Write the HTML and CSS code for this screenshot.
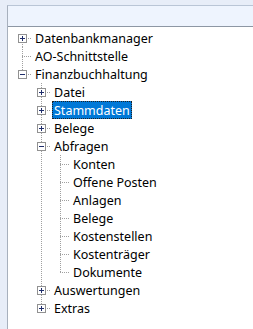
FILE: index.html
```html
<!DOCTYPE html>
<html lang="de">
  <head>
    <meta charset="UTF-8" />
    <meta name="viewport" content="width=device-width, initial-scale=1.0" />
    <title>Navigation</title>
    <link rel="stylesheet" href="styles.css">
  </head>
  <body>
    <div class="frame">
      <div class="header"></div>

      <!-- Tree with dotted connector lines -->
      <div class="panel">
        <ul class="tree">
          <li>
            <div class="row">
              <svg class="tgl" width="9" height="9"><rect x="0.5" y="0.5" width="8" height="8" fill="#fff" stroke="#919191"/><path d="M2 4.5h5M4.5 2v5" stroke="#1f2d6b"/></svg>
              <span class="label">Datenbankmanager</span>
            </div>
          </li>
          <li>
            <div class="row"><span class="slot"></span><span class="label">AO-Schnittstelle</span></div>
          </li>
          <li>
            <div class="row">
              <svg class="tgl" width="9" height="9"><rect x="0.5" y="0.5" width="8" height="8" fill="#fff" stroke="#919191"/><path d="M2 4.5h5" stroke="#1f2d6b"/></svg>
              <span class="label">Finanzbuchhaltung</span>
            </div>
            <ul>
              <li>
                <div class="row">
                  <svg class="tgl" width="9" height="9"><rect x="0.5" y="0.5" width="8" height="8" fill="#fff" stroke="#919191"/><path d="M2 4.5h5M4.5 2v5" stroke="#1f2d6b"/></svg>
                  <span class="label">Datei</span>
                </div>
              </li>
              <li>
                <div class="row">
                  <svg class="tgl" width="9" height="9"><rect x="0.5" y="0.5" width="8" height="8" fill="#fff" stroke="#919191"/><path d="M2 4.5h5M4.5 2v5" stroke="#1f2d6b"/></svg>
                  <span class="label selected">Stammdaten</span>
                </div>
              </li>
              <li>
                <div class="row">
                  <svg class="tgl" width="9" height="9"><rect x="0.5" y="0.5" width="8" height="8" fill="#fff" stroke="#919191"/><path d="M2 4.5h5M4.5 2v5" stroke="#1f2d6b"/></svg>
                  <span class="label">Belege</span>
                </div>
              </li>
              <li>
                <div class="row">
                  <svg class="tgl" width="9" height="9"><rect x="0.5" y="0.5" width="8" height="8" fill="#fff" stroke="#919191"/><path d="M2 4.5h5" stroke="#1f2d6b"/></svg>
                  <span class="label">Abfragen</span>
                </div>
                <ul>
                  <li><div class="row"><span class="slot"></span><span class="label">Konten</span></div></li>
                  <li><div class="row"><span class="slot"></span><span class="label">Offene Posten</span></div></li>
                  <li><div class="row"><span class="slot"></span><span class="label">Anlagen</span></div></li>
                  <li><div class="row"><span class="slot"></span><span class="label">Belege</span></div></li>
                  <li><div class="row"><span class="slot"></span><span class="label">Kostenstellen</span></div></li>
                  <li><div class="row"><span class="slot"></span><span class="label">Kostenträger</span></div></li>
                  <li><div class="row"><span class="slot"></span><span class="label">Dokumente</span></div></li>
                </ul>
              </li>
              <li>
                <div class="row">
                  <svg class="tgl" width="9" height="9"><rect x="0.5" y="0.5" width="8" height="8" fill="#fff" stroke="#919191"/><path d="M2 4.5h5M4.5 2v5" stroke="#1f2d6b"/></svg>
                  <span class="label">Auswertungen</span>
                </div>
              </li>
              <li>
                <div class="row">
                  <svg class="tgl" width="9" height="9"><rect x="0.5" y="0.5" width="8" height="8" fill="#fff" stroke="#919191"/><path d="M2 4.5h5M4.5 2v5" stroke="#1f2d6b"/></svg>
                  <span class="label">Extras</span>
                </div>
              </li>
            </ul>
          </li>
        </ul>
      </div>
    </div>
  </body>
</html>
```

FILE: styles.css
```css
html,
body {
  height: 100%;
}

body {
  margin: 0;
  background-color: #e7edf8;
  font-family: "Noto Sans", sans-serif;
  font-size: 12.5px;
  color: #000;
}

.frame {
  display: flex;
  flex-direction: column;
  height: calc(100% - 5px);
  margin: 5px 0 0 7px;
  border-left: 1px solid #a7b0bd;
  border-top: 1px solid #b9c5d6;
  box-sizing: border-box;
}

.header {
  height: 20px;
  background-color: #eef4fe;
  border-bottom: 1px solid #8d97a4;
}

.panel {
  flex: 1;
  background-color: #fff;
  padding-top: 2px;
}

ul {
  list-style: none;
  margin: 0;
  padding: 0;
}

.tree ul {
  padding-left: 19px;
}

li {
  position: relative;
}

/* vertical connector */
li::before {
  content: "";
  position: absolute;
  left: 14px;
  top: 0;
  bottom: 0;
  width: 1px;
  background-image: linear-gradient(to bottom, #a0a0a0 50%, transparent 50%);
  background-size: 1px 2px;
}

li:last-child::before {
  bottom: auto;
  height: 10px;
}

.tree > li:first-child::before {
  top: 9px;
}

/* horizontal connector */
li::after {
  content: "";
  position: absolute;
  left: 14px;
  top: 9px;
  width: 10px;
  height: 1px;
  background-image: linear-gradient(to right, #a0a0a0 50%, transparent 50%);
  background-size: 2px 1px;
}

.row {
  display: flex;
  align-items: flex-start;
  height: 18px;
  padding-left: 10px;
}

.tgl,
.slot {
  flex: none;
  width: 9px;
  height: 9px;
  margin: 5px 6px 0 0;
  position: relative;
  z-index: 1;
}

.label {
  position: relative;
  z-index: 1;
  padding: 0 2px;
  line-height: 19px;
  height: 18px;
  white-space: nowrap;
  box-sizing: border-box;
}

.selected {
  background-color: #0078d7;
  color: #fff;
  border: 1px dotted #222;
  line-height: 17px;
  padding: 0 1px;
}
```
